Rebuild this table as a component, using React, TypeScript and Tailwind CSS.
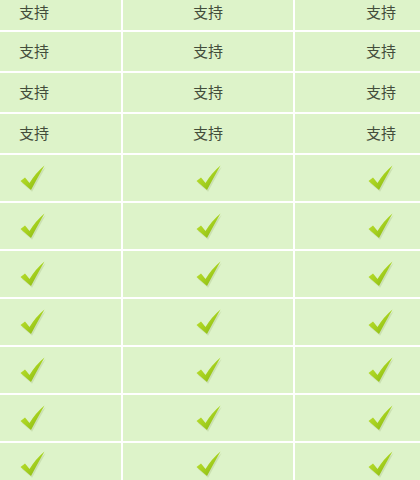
import React from "react";

// Tabela de suporte: linhas de texto e depois linhas com ícone de check
function Check() {
  return (
    <svg width="27" height="27" viewBox="0 0 27 27">
      <defs>
        <linearGradient id="chk" x1="0" y1="0" x2="1" y2="1">
          <stop offset="0" stopColor="#c6e23a" />
          <stop offset="0.5" stopColor="#a6d11e" />
          <stop offset="1" stopColor="#7fae12" />
        </linearGradient>
      </defs>
      <path d="M2 17 L6.5 13.5 L11 19 Q17 9 26 1.5 Q20.5 11 12.5 26 Z" fill="#b9cf9a" opacity="0.5" transform="translate(0.6,0.8)" />
      <path d="M1.5 16 L6 12.5 L10.5 18 Q16.5 8 25.5 0.5 Q20 10 12 25 Z" fill="url(#chk)" />
    </svg>
  );
}

const cell = "bg-[#ddf3c9] flex items-center";

function TextRow({ first }: { first?: boolean }) {
  const h = first ? "h-[30px] items-start pt-[1px]" : "h-[39px]";
  return (
    <div className="grid grid-cols-[121px_170px_1fr] gap-x-[2px]">
      <div className={`${cell} ${h} pl-[19px]`}>支持</div>
      <div className={`${cell} ${h} justify-center`}>支持</div>
      <div className={`${cell} ${h} pl-[71px]`}>支持</div>
    </div>
  );
}

function CheckRow({ last }: { last?: boolean }) {
  const h = last ? "h-[40px] items-start pt-[8px]" : "h-[46px]";
  return (
    <div className="grid grid-cols-[121px_170px_1fr] gap-x-[2px]">
      <div className={`${cell} ${h} pl-[19px]`}><Check /></div>
      <div className={`${cell} ${h} justify-center`}><Check /></div>
      <div className={`${cell} ${h} pl-[72px]`}><Check /></div>
    </div>
  );
}

export default function App() {
  return (
    <div
      className="w-[420px] h-[480px] overflow-hidden bg-white flex flex-col gap-[2px] text-[15px] text-[#434d3b]"
      style={{ fontFamily: '"Noto Sans CJK SC", "Noto Sans", sans-serif' }}
    >
      <TextRow first />
      <TextRow />
      <TextRow />
      <TextRow />
      <CheckRow />
      <CheckRow />
      <CheckRow />
      <CheckRow />
      <CheckRow />
      <CheckRow />
      <CheckRow last />
    </div>
  );
}
